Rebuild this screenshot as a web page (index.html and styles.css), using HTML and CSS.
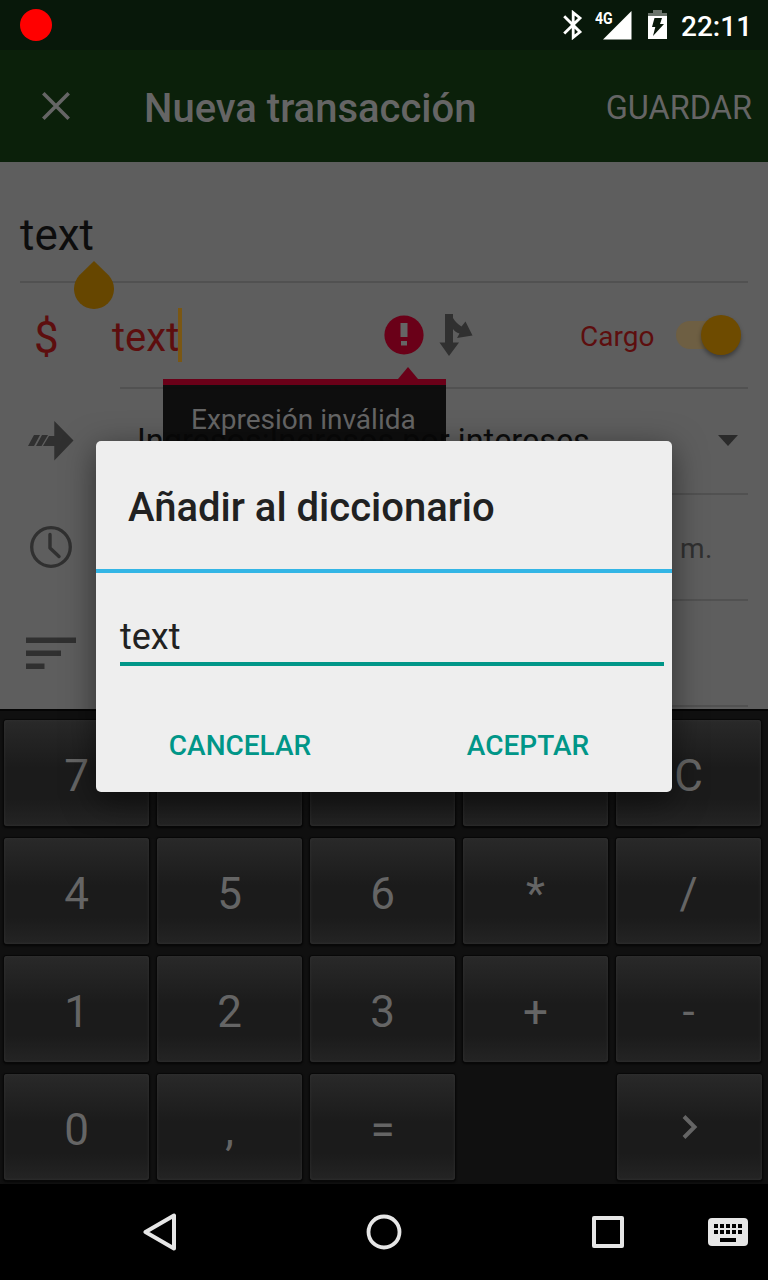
FILE: index.html
```html
<!DOCTYPE html>
<html lang="es">
<head>
<meta charset="utf-8">
<title>Nueva transacción</title>
<link rel="stylesheet" href="styles.css">
</head>
<body>
<div class="screen">
  <div class="status">
    <span class="record"></span>
    <div class="status-icons">
      <svg class="bt" width="20" height="30" viewBox="0 0 20 30" fill="none" stroke="#fff" stroke-width="2.8"><path d="M1.200 6.200 17 22 10.200 27.400V2.600L17 8 1.200 23.600"/></svg>
      <div class="signal"><svg width="29" height="29" viewBox="0 0 29 29" fill="#fff"><path d="M28.500 0V28.500H0z"/></svg><span class="net">4G</span></div>
      <svg class="battery" width="20" height="30" viewBox="0 0 20 30"><path fill="#6b746c" d="M5 0h9v3h5v3H0V3h5z"/><path fill="#fff" d="M0 6h19v23H0z"/><path fill="#08180a" d="M6.500 8h7.500l-2 6h4L5 26l2.300-9H4z"/></svg>
      <span class="time">22:11</span>
    </div>
  </div>

  <header class="bar">
    <svg class="close" width="28" height="28" viewBox="0 0 28 28" stroke="#656565" stroke-width="3.600"><path d="M1.300 1.300 26.700 26.700M26.700 1.300 1.300 26.700"/></svg>
    <h1 class="title">Nueva transacción</h1>
    <span class="save">GUARDAR</span>
  </header>

  <main class="form">
    <div class="row payee"><span class="payee-text">text</span></div>
    <div class="row amount">
      <span class="currency">$</span>
      <div class="fields">
        <span class="value">text</span><span class="caret"></span>
        <svg class="error" width="40" height="40" viewBox="0 0 40 40"><circle cx="20" cy="20" r="19.600" fill="#6a0018"/><path fill="#656565" d="M16.500 8h7v14h-7zM17 26h6v4.500h-6z"/></svg>
        <svg class="split" width="34" height="42" viewBox="0 0 34 42" fill="#303030"><path d="M6 0h8v4c2 3.500 5 6.500 8.500 8.500L26.500 7.500 33.500 21.500 18 24l2.500-4.500c-3-1-5-2.500-6.500-4.500V28.500h6L10 42 .5 28.500H6z"/></svg>
        <span class="kind">Cargo</span>
        <span class="switch"><i class="thumb"></i></span>
      </div>
    </div>
    <div class="row account">
      <svg class="arrow" width="46" height="40" viewBox="0 0 46 40" fill="#303030"><path d="M26.300 0 45.500 19.500 26.300 39.500V25H15l6-10h5.300zM6 14h6L6 25H0zM14 14h6l-6.500 11H8z"/></svg>
      <span class="account-text">Ingresos:Ingresos por intereses</span>
      <svg class="drop" width="20" height="11" viewBox="0 0 20 11"><path fill="#2a2a2a" d="M0 0h20L10 11z"/></svg>
    </div>
    <div class="row date">
      <svg class="clock" width="42" height="42" viewBox="0 0 42 42" fill="none" stroke="#303030"><circle cx="21" cy="21" r="19.300" stroke-width="3.300"/><path stroke-width="3.400" stroke-linejoin="round" stroke-linecap="round" d="M20 8.500V22l9 8.500"/></svg>
      <span class="meridiem">m.</span>
    </div>
    <div class="row notes">
      <svg class="lines" width="50" height="33" viewBox="0 0 50 33" fill="#303030"><path d="M0 .5h50v5.500H0zM0 13.500h35V19H0zM0 26.500h18.500V32H0z"/></svg>
    </div>
    <svg class="handle" width="40" height="48" viewBox="0 0 40 48"><path fill="#664600" d="M20 0 34.600 14.300A20 20 0 1 1 5.400 14.300z"/></svg>
    <div class="tooltip"><svg class="tip" width="20" height="12" viewBox="0 0 20 12"><path fill="#6a0018" d="M10 0 20 12H0z"/></svg>Expresión inválida</div>
  </main>

  <section class="keypad">
    <div class="key">7</div><div class="key"></div><div class="key"></div><div class="key"></div><div class="key">C</div>
    <div class="key">4</div><div class="key">5</div><div class="key">6</div><div class="key">*</div><div class="key">/</div>
    <div class="key">1</div><div class="key">2</div><div class="key">3</div><div class="key">+</div><div class="key">-</div>
    <div class="key">0</div><div class="key">,</div><div class="key">=</div><div></div>
    <div class="key next"><svg width="16" height="24" viewBox="0 0 16 24" fill="none" stroke="#656565" stroke-width="4"><path d="M2 1.500 12.500 12 2 22.500"/></svg></div>
  </section>

  <nav class="nav">
    <svg class="back" width="34" height="38" viewBox="0 0 34 38"><path fill="none" stroke="#e6e6e6" stroke-width="4" stroke-linejoin="round" d="M31 2.500V35.500L2.500 19z"/></svg>
    <svg class="home" width="36" height="36" viewBox="0 0 36 36"><circle cx="18" cy="18" r="15.500" fill="none" stroke="#e6e6e6" stroke-width="3.800"/></svg>
    <svg class="recent" width="32" height="32" viewBox="0 0 32 32"><path fill="none" stroke="#e6e6e6" stroke-width="4" stroke-linejoin="round" d="M2 2h28v28H2z"/></svg>
    <svg class="kbd" width="40" height="28" viewBox="0 0 40 28"><rect width="40" height="28" rx="4" fill="#e6e6e6"/><path fill="#000" d="M6 6h4v4H6zM12 6h4v4h-4zM18 6h4v4h-4zM24 6h4v4h-4zM30 6h4v4h-4zM6 12h4v4H6zM12 12h4v4h-4zM18 12h4v4h-4zM24 12h4v4h-4zM30 12h4v4h-4zM12 20h16v4H12z"/></svg>
  </nav>

  <div class="dialog">
    <h2 class="dialog-title">Añadir al diccionario</h2>
    <div class="dialog-input">text</div>
    <div class="dialog-actions"><span>CANCELAR</span><span>ACEPTAR</span></div>
  </div>
</div>
</body>
</html>
```

FILE: styles.css
```css
* { box-sizing: border-box; }
body { margin: 0; background: #000; font-family: Roboto, "Noto Sans", sans-serif; }
svg { display: block; flex: none; }
.screen { position: relative; width: 768px; height: 1280px; overflow: hidden; display: flex; flex-direction: column; }

.status { height: 50px; flex: none; background: #08180a; display: flex; align-items: center; justify-content: space-between; padding: 0 17px 0 20px; }
.record { width: 32px; height: 32px; border-radius: 50%; background: #f00; }
.status-icons { display: flex; align-items: center; color: #fff; }
.bt { margin-right: 20px; }
.signal { position: relative; margin-right: 16px; }
.net { position: absolute; left: -8px; top: -1px; font-size: 17px; line-height: 16px; font-weight: 700; transform: scaleX(.83); transform-origin: 0 0; }
.battery { margin-right: 13px; }
.time { width: 70px; font-size: 28px; line-height: 32px; font-weight: 500; padding-top: 3px; }

.bar { height: 112px; flex: none; background: #0b200a; color: #656565; display: flex; align-items: center; padding: 4px 16px 0 42px; }
.close { margin-top: -4px; }
.title { margin: 0 0 0 74px; font-size: 40px; line-height: 48px; font-weight: 500; flex: 1; padding-top: 2px; }
.save { font-size: 32.5px; line-height: 40px; }

.form { position: relative; height: 547px; flex: none; background: #5e5e5e; overflow: hidden; }
.row { position: relative; display: flex; align-items: center; height: 106px; margin-right: 20px; padding-bottom: 2px; }
.row::after { content: ""; position: absolute; left: 120px; right: 0; bottom: 0; height: 2px; background: #515151; }
.payee { height: 121px; padding: 24px 0 0 20px; color: #0d0d0d; font-size: 44px; line-height: 52px; }
.payee::after { left: 20px; }
.currency { width: 112px; padding: 5px 0 0 34px; font-size: 44px; color: #5d0e0e; }
.fields { flex: 1; display: flex; align-items: center; }
.value { font-size: 40px; color: #5d0e0e; width: 66px; padding-top: 4px; }
.caret { width: 4px; height: 54px; background: #7a5714; }
.error { margin-left: 202px; }
.split { margin-left: 15px; }
.kind { margin-left: 107px; width: 96px; font-size: 28px; color: #5d0e0e; padding-top: 2px; }
.switch { width: 65px; height: 28px; border-radius: 14px; background: #6e5f43; display: flex; align-items: center; justify-content: flex-end; }
.thumb { width: 40px; height: 40px; flex: none; border-radius: 50%; background: #6e4b00; box-shadow: 0 3px 4px rgba(0,0,0,.35); }
.account { padding-left: 28px; }
.account-text { margin-left: 63px; flex: 1; font-size: 32.4px; color: #0d0d0d; white-space: nowrap; }
.drop { margin: -2px 10px 0 0; }
.date { padding-left: 30px; justify-content: space-between; }
.meridiem { font-size: 28px; color: #303030; padding: 3px 35px 0 0; letter-spacing: .5px; }
.notes { padding-left: 26px; }
.handle { position: absolute; left: 74px; top: 99px; }
.tooltip { position: absolute; left: 163px; top: 217px; width: 283px; height: 90px; background: rgba(8,8,8,.92); border-top: 6px solid #6a0018; color: #656565; font-size: 28px; line-height: 34px; padding: 18px 0 0 28px; white-space: nowrap; }
.tip { position: absolute; left: 235px; top: -18px; }

.keypad { height: 475px; flex: none; background: #101010; border-top: 2px solid #050505; display: grid; grid-template-columns: repeat(5, 145px); grid-auto-rows: 106px; column-gap: 8px; row-gap: 12px; padding: 9px 0 0 4px; }
.key { display: flex; align-items: center; justify-content: center; padding-top: 6px; border-radius: 3px; color: #656565; font-size: 44px; background: linear-gradient(#292929, #1b1b1b 45%, #1b1b1b 75%, #242424); box-shadow: 0 0 0 1px #080808, 0 1px 2px 1px #060606, inset 0 0 3px #343434; }
.next { margin: 0 -1px 0 1px; padding: 0; }

.nav { flex: 1; background: #000; display: flex; align-items: center; padding-left: 143px; }
.home { margin-left: 189px; }
.recent { margin-left: 190px; }
.kbd { margin-left: 84px; }

.dialog { position: absolute; left: 96px; top: 441px; width: 576px; height: 351px; background: #eee; border-radius: 5px; box-shadow: 0 8px 32px rgba(0,0,0,.5); color: #212121; }
.dialog-title { margin: 0; height: 132px; padding: 0 32px; border-bottom: 4px solid #33b5e5; font-size: 40px; line-height: 134px; font-weight: 500; }
.dialog-input { margin: 36px 8px 0 24px; height: 57px; border-bottom: 4px solid #009688; font-size: 36px; line-height: 56px; }
.dialog-actions { display: grid; grid-template-columns: 1fr 1fr; text-align: center; margin-top: 60px; color: #009688; font-size: 28px; line-height: 40px; font-weight: 500; }
```
